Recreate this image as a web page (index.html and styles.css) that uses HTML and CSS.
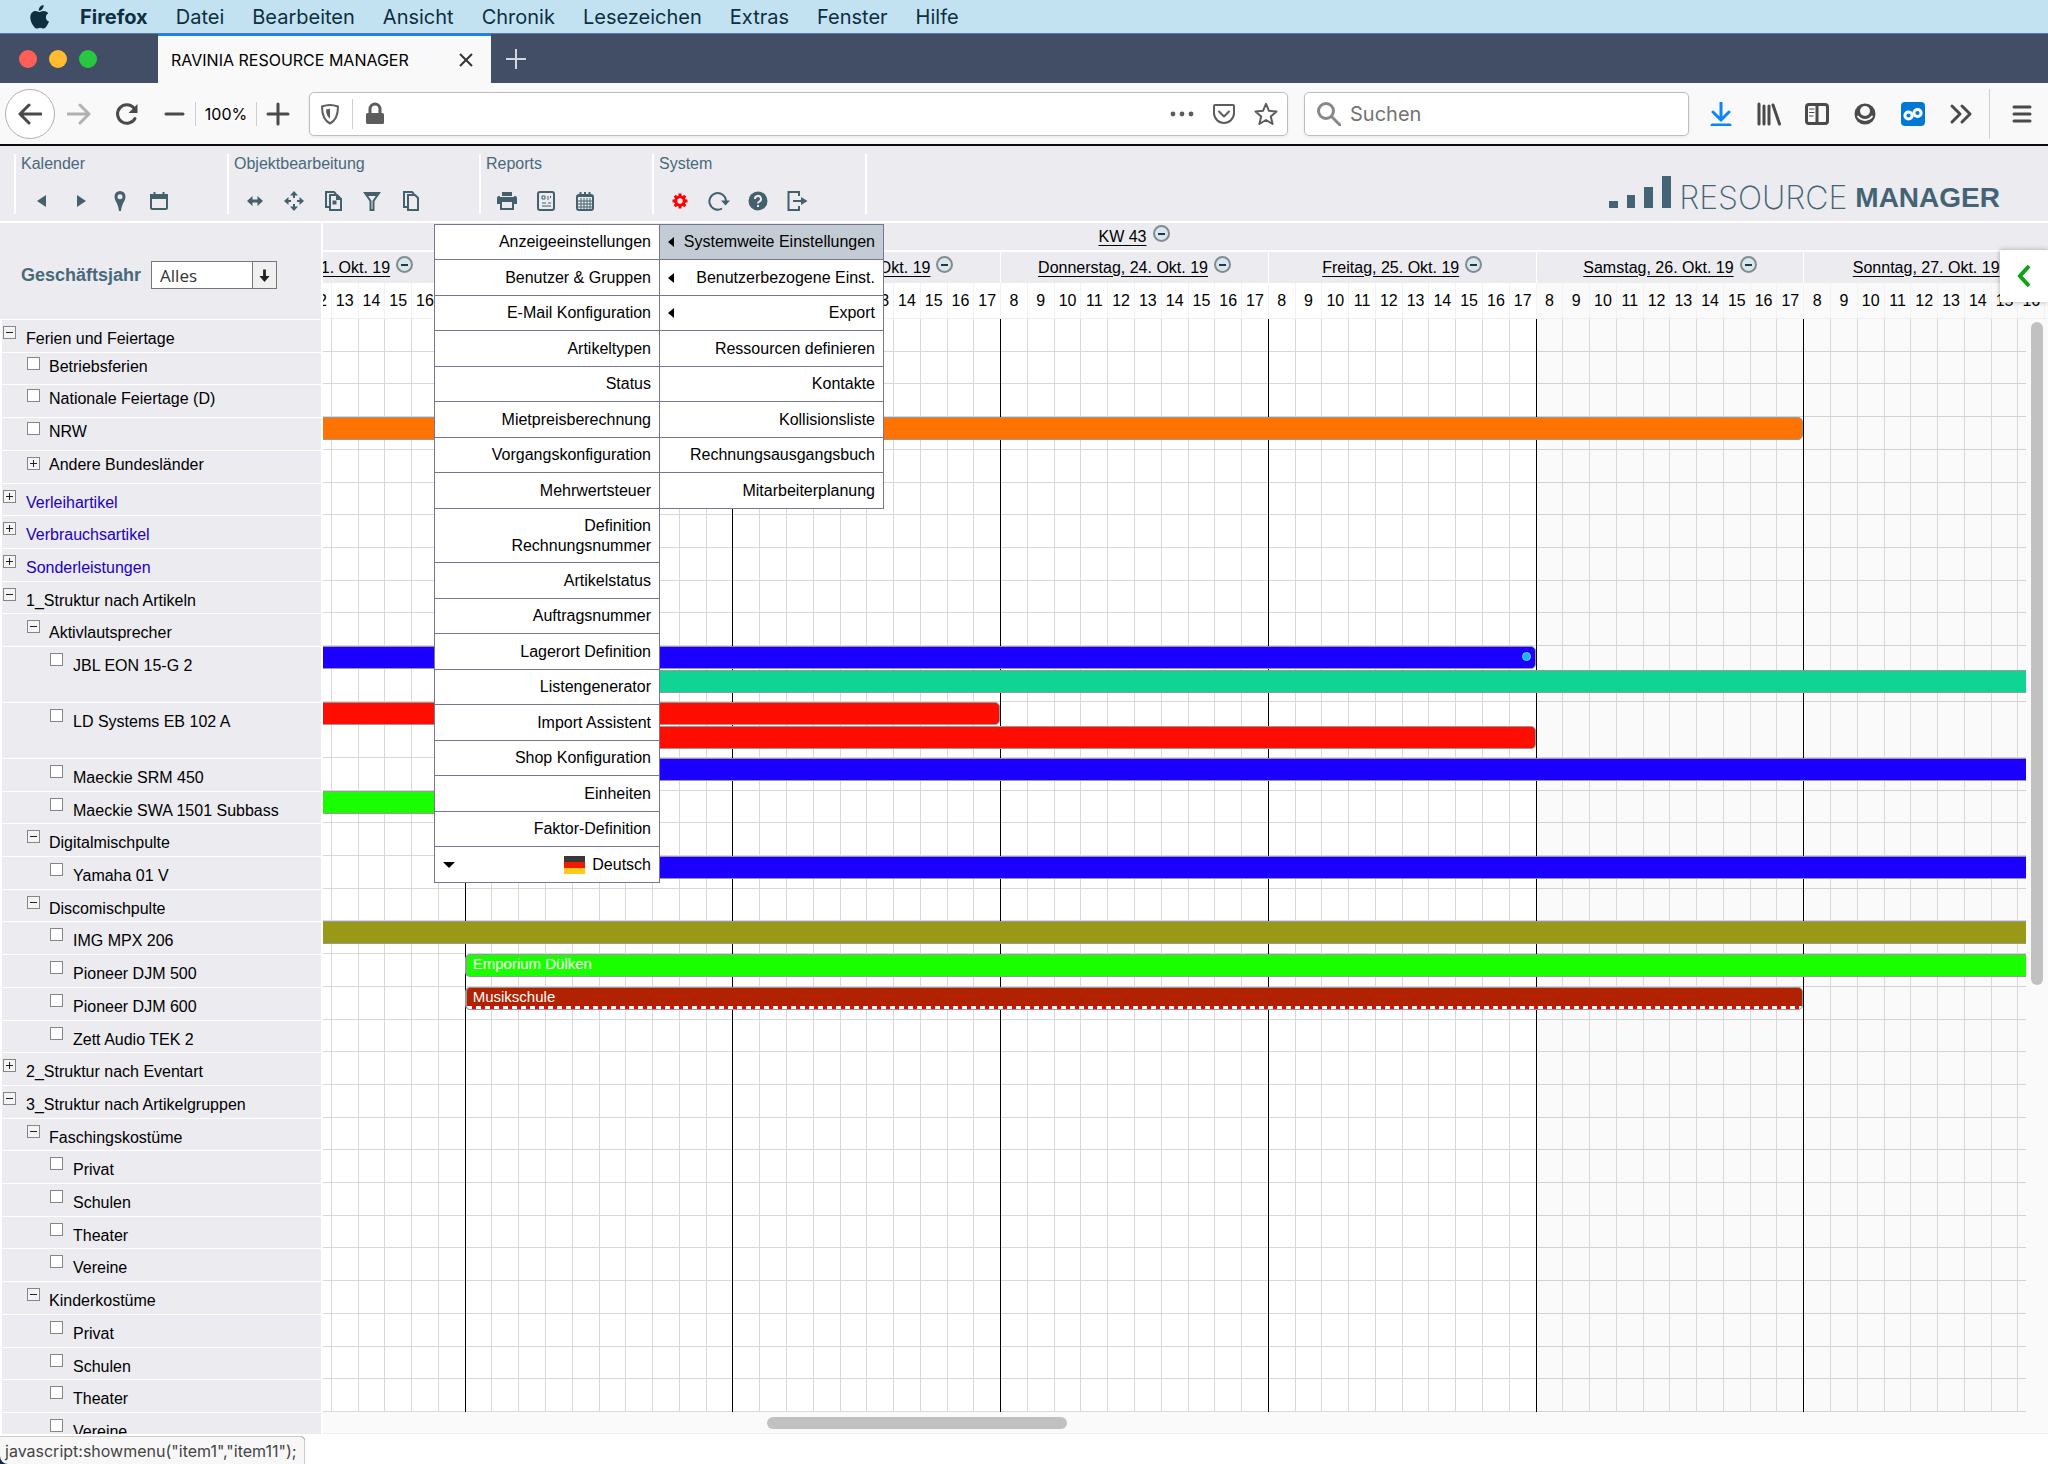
FILE: index.html
```html
<!DOCTYPE html>
<html lang="de">
<head>
    <meta charset="UTF-8">
    <meta name="viewport" content="width=device-width, initial-scale=1.0">
    <title>RAVINIA RESOURCE MANAGER</title>
    <link rel="stylesheet" href="styles.css">
</head>
<body>
    <nav class="mac-bar">
        <svg class="apple" viewBox="0 0 20 24"><path d="M13.6 0c.2 1.600-.4 3-1.300 4-.9 1.100-2.200 1.800-3.500 1.700-.2-1.500.5-3 1.300-3.900C11 .8 12.500.1 13.600 0zM18.300 8.200c-1.500.9-2.400 2.200-2.400 4 0 2.100 1.200 3.700 3.100 4.400-.5 1.500-1.300 3-2.300 4.400-.9 1.300-1.800 2.500-3.200 2.500-1.400 0-1.800-.8-3.400-.8s-2.100.8-3.400.8c-1.400 0-2.400-1.300-3.400-2.700C1.300 18 .3 14.900.3 12.500c0-4 2.600-6.400 5.200-6.400 1.500 0 2.800 1 3.700 1 .9 0 2.300-1.100 4.100-1.100 2 0 3.800.8 5 2.200z"/></svg>
        <a class="app-name" href="#">Firefox</a>
        <a href="#">Datei</a>
        <a href="#">Bearbeiten</a>
        <a href="#">Ansicht</a>
        <a href="#">Chronik</a>
        <a href="#">Lesezeichen</a>
        <a href="#">Extras</a>
        <a href="#">Fenster</a>
        <a href="#">Hilfe</a>
    </nav>

    <div class="tab-bar">
        <div class="lights">
            <span class="light close"></span>
            <span class="light minimize"></span>
            <span class="light maximize"></span>
        </div>
        <div class="tab">
            <span>RAVINIA RESOURCE MANAGER</span>
            <button aria-label="Tab schließen"><svg width="16" height="16" viewBox="0 0 16 16"><path d="M2 2l12 12M14 2L2 14"/></svg></button>
        </div>
        <button class="new-tab" aria-label="Neuer Tab"><svg width="22" height="22" viewBox="0 0 22 22"><path d="M11 1v20M1 11h20"/></svg></button>
    </div>

    <div class="nav-bar">
        <button class="back" aria-label="Zurück"><svg viewBox="0 0 24 24"><path d="M23 12H2M11 3l-9 9 9 9"/></svg></button>
        <button class="nav-btn off" aria-label="Vor"><svg viewBox="0 0 24 24"><path d="M1 12h21M13 3l9 9-9 9"/></svg></button>
        <button class="nav-btn" aria-label="Neu laden"><svg viewBox="0 0 24 24"><path d="M20 16.500A9.300 9.300 0 1 1 19 6"/><path class="solid" d="M22.500 2v9h-9z"/></svg></button>
        <div class="zoom">
            <button class="nav-btn" aria-label="Verkleinern"><svg viewBox="0 0 24 24"><path d="M4 12h17"/></svg></button>
            <span class="zoom-value">100%</span>
            <button class="nav-btn" aria-label="Vergrößern"><svg viewBox="0 0 24 24"><path d="M12 2v20M2 12h20"/></svg></button>
        </div>
        <div class="url-box">
            <svg class="shield" viewBox="0 0 20 24"><path d="M10 3c2.500 0 5 .5 8 1.500 0 8-2 14-8 17-6-3-8-9-8-17C5 3.500 7.500 3 10 3z"/><path class="solid" d="M6 7.500l4-.7v10c-2.500-2-4-5-4-9.300z"/></svg>
            <span class="line"></span>
            <svg class="lock" viewBox="0 0 20 24"><path d="M5 12V7a5 5 0 0 1 10 0v5"/><rect class="solid" x="1" y="11" width="18" height="11" rx="1.500"/></svg>
            <input type="text" aria-label="Adresse">
            <svg viewBox="0 0 24 24"><circle class="solid" cx="3" cy="12" r="2.400"/><circle class="solid" cx="12" cy="12" r="2.400"/><circle class="solid" cx="21" cy="12" r="2.400"/></svg>
            <svg viewBox="0 0 24 24"><path d="M3 3h18a1 1 0 0 1 1 1v7a10 10 0 0 1-20 0V4a1 1 0 0 1 1-1zM7 9.500l5 5 5-5"/></svg>
            <svg viewBox="0 0 24 24"><path d="M12 1.800l3 7 7.500.6-5.700 5 1.800 7.600-6.600-4-6.600 4 1.800-7.600-5.700-5 7.500-.6z"/></svg>
        </div>
        <div class="search-box">
            <svg viewBox="0 0 24 24"><circle cx="9" cy="9" r="7.500"/><path d="M15 15l8 8"/></svg>
            <input type="search" placeholder="Suchen" aria-label="Suchen">
        </div>
        <div class="nav-tools">
            <button class="nav-btn download" aria-label="Downloads"><svg viewBox="0 0 24 24"><path d="M12 1v16M4 10l8 8 8-8M3 23h18"/></svg></button>
            <button class="nav-btn" aria-label="Bibliothek"><svg viewBox="0 0 24 24"><path d="M2 2v20M7 4v18M12 4v18M16 3l6.500 19"/></svg></button>
            <button class="nav-btn" aria-label="Sidebar"><svg viewBox="0 0 24 24"><rect x="1.500" y="2.500" width="21" height="19" rx="2.500"/><path d="M12 3v18"/><path class="thin" d="M4.500 7H9M4.500 10.500H9M4.500 14H8"/></svg></button>
            <button class="nav-btn" aria-label="Konto"><svg viewBox="0 0 24 24"><circle class="solid" cx="12" cy="12" r="10.500"/><circle class="hole" cx="12" cy="9" r="5"/><path class="arc" d="M5 14.500c3.500 4.500 10.500 4.500 14 0"/></svg></button>
            <button class="nav-btn" aria-label="Erweiterung"><svg viewBox="0 0 24 24"><rect class="badge" width="24" height="24" rx="4"/><circle class="ring" cx="7.500" cy="13.500" r="3.600"/><circle class="ring" cx="16.500" cy="11" r="3.600"/></svg></button>
            <button class="nav-btn" aria-label="Mehr Werkzeuge"><svg viewBox="0 0 24 24"><path d="M3 4l8 8-8 8M13 4l8 8-8 8"/></svg></button>
            <span class="line tall"></span>
            <button class="nav-btn" aria-label="Menü"><svg viewBox="0 0 24 24"><path d="M4 5h16M4 12h16M4 19h16"/></svg></button>
        </div>
    </div>

    <header class="toolbar">
        <section class="group kalender">
            <h2>Kalender</h2>
            <div class="icons">
                <button aria-label="Zurück"><svg viewBox="0 0 22 22"><path class="fill" d="M15 5v12l-9-6z"/></svg></button>
                <button aria-label="Weiter"><svg viewBox="0 0 22 22"><path class="fill" d="M7 5v12l9-6z"/></svg></button>
                <button aria-label="Heute"><svg viewBox="0 0 22 22"><path class="fill" fill-rule="evenodd" d="M11 1a5.500 5.500 0 0 1 5.500 5.500C16.500 11 12.500 14 12 21h-2C9.500 14 5.500 11 5.500 6.500A5.500 5.500 0 0 1 11 1zm0 3.200a2.500 2.500 0 1 0 0 5 2.500 2.500 0 0 0 0-5z"/></svg></button>
                <button aria-label="Kalender"><svg viewBox="0 0 22 22"><rect x="3" y="5" width="16" height="14" rx="1.500"/><path class="fill" d="M2 4h18v5H2z"/><path d="M6.500 2v3M15.500 2v3"/></svg></button>
            </div>
        </section>
        <section class="group objekt">
            <h2>Objektbearbeitung</h2>
            <div class="icons">
                <button aria-label="Verlängern"><svg viewBox="0 0 22 22"><path class="fill" d="M3 11l5.500-5v3.400h5V6l5.500 5-5.500 5v-3.400h-5V16z"/></svg></button>
                <button aria-label="Verschieben"><svg viewBox="0 0 22 22"><path class="fill" d="M11 1l4 4.500h-3V8h-2V5.500H7zM11 21l-4-4.500h3V14h2v2.500h3zM1 11l4.500-4v3H8v2H5.500v3zM21 11l-4.500 4v-3H14v-2h2.500V7z"/></svg></button>
                <button aria-label="Ausschneiden"><svg viewBox="0 0 22 22"><path d="M8 17H4V2h8l2 2M8 5h7l4 4v11H8zM15 5v4h4"/><path class="fill" d="M10.500 10.500h4v4h-4z"/></svg></button>
                <button aria-label="Filter"><svg viewBox="0 0 22 22"><path d="M4 3h14l-5.500 8v9h-3v-9z"/><path class="fill" d="M3 2h16l-2 4H5z"/></svg></button>
                <button aria-label="Kopieren"><svg viewBox="0 0 22 22"><path d="M8 17H4V2h8l2 2M8 5h7l3 3v12H8z"/></svg></button>
            </div>
        </section>
        <section class="group reports">
            <h2>Reports</h2>
            <div class="icons">
                <button aria-label="Drucken"><svg viewBox="0 0 22 22"><path class="fill" fill-rule="evenodd" d="M6 2h10v4h3a2 2 0 0 1 2 2v6h-3v6H4v-6H1V8a2 2 0 0 1 2-2h3zm0 10v6h10v-6z"/><path class="gap" d="M4 6.500h14"/></svg></button>
                <button aria-label="Bericht"><svg viewBox="0 0 22 22"><rect x="3" y="2" width="16" height="18" rx="2"/><path class="thin" d="M7 6h3v3H7zM13 6v4M15.500 6v2M7 13h4M13 13h3M7 16h9"/></svg></button>
                <button aria-label="Terminliste"><svg viewBox="0 0 22 22"><rect x="3" y="5" width="16" height="15" rx="2"/><path d="M3 6h16M6.500 2v3M11 2v3M15.500 2v3"/><path class="thin" d="M7 8v11M10 8v11M13 8v11M16 8v11M4 11h14M4 14h14M4 17h14"/></svg></button>
            </div>
        </section>
        <section class="group system">
            <h2>System</h2>
            <div class="icons">
                <button class="active" aria-label="Einstellungen"><svg viewBox="0 0 22 22"><circle cx="11" cy="11" r="4.300"/><path d="M11 6V3.500M11 16v2.500M6 11H3.500M16 11h2.500M7.500 7.500L5.700 5.700M14.500 7.500l1.800-1.800M7.500 14.500l-1.800 1.800M14.500 14.500l1.800 1.800"/></svg></button>
                <button aria-label="Aktualisieren"><svg viewBox="0 0 22 22"><path d="M14 18.500A8.300 8.300 0 1 1 18 11"/><path class="fill" d="M13 10.500h9l-4.500 5z"/></svg></button>
                <button aria-label="Hilfe"><svg viewBox="0 0 22 22"><circle class="fill" cx="11" cy="11" r="9.500"/><path class="mark" d="M8 9a3 3 0 1 1 4.500 2.500c-1 .6-1.500 1-1.500 2M11 15v2"/></svg></button>
                <button aria-label="Abmelden"><svg viewBox="0 0 22 22"><path d="M13 6V2H2.500v18H13v-4M7 11h9"/><path class="fill" d="M15 7l6.500 4-6.500 4z"/></svg></button>
            </div>
            <ul class="menu">
                <li class="selected">
                    <i class="arrow-left"></i><a href="#">Systemweite Einstellungen</a>
                    <ul class="menu submenu">
                        <li><a href="#">Anzeigeeinstellungen</a></li>
                        <li><a href="#">Benutzer &amp; Gruppen</a></li>
                        <li><a href="#">E-Mail Konfiguration</a></li>
                        <li><a href="#">Artikeltypen</a></li>
                        <li><a href="#">Status</a></li>
                        <li><a href="#">Mietpreisberechnung</a></li>
                        <li><a href="#">Vorgangskonfiguration</a></li>
                        <li><a href="#">Mehrwertsteuer</a></li>
                        <li class="two-lines"><a href="#">Definition<br>Rechnungsnummer</a></li>
                        <li><a href="#">Artikelstatus</a></li>
                        <li><a href="#">Auftragsnummer</a></li>
                        <li><a href="#">Lagerort Definition</a></li>
                        <li><a href="#">Listengenerator</a></li>
                        <li><a href="#">Import Assistent</a></li>
                        <li><a href="#">Shop Konfiguration</a></li>
                        <li><a href="#">Einheiten</a></li>
                        <li><a href="#">Faktor-Definition</a></li>
                        <li>
                            <i class="arrow-down"></i>
                            <svg class="flag" viewBox="0 0 21 18"><path fill="#3a3636" d="M0 0h21v6H0z"/><path fill="#f01a00" d="M0 6h21v6H0z"/><path fill="#ffc81a" d="M0 12h21v6H0z"/></svg>
                            <a href="#">Deutsch</a>
                        </li>
                    </ul>
                </li>
                <li><i class="arrow-left"></i><a href="#">Benutzerbezogene Einst.</a></li>
                <li><i class="arrow-left"></i><a href="#">Export</a></li>
                <li><a href="#">Ressourcen definieren</a></li>
                <li><a href="#">Kontakte</a></li>
                <li><a href="#">Kollisionsliste</a></li>
                <li><a href="#">Rechnungsausgangsbuch</a></li>
                <li><a href="#">Mitarbeiterplanung</a></li>
            </ul>
        </section>
        <div class="logo">
            <svg viewBox="0 0 62 32"><path d="M0 25h9v7H0zM18 19h8v13h-8zM35 11h9v21h-9zM53 0h9v32h-9z"/></svg>
            <span class="logo-light">RESOURCE</span>
            <span class="logo-bold">MANAGER</span>
        </div>
    </header>

    <main class="planner">
        <aside class="sidebar">
            <div class="filter">
                <label for="year">Geschäftsjahr</label>
                <div class="select">
                    <select id="year"><option>Alles</option></select>
                    <svg viewBox="0 0 22 28"><path d="M9.500 8h3v7h4L11 21.500 5.500 15h4z"/></svg>
                </div>
            </div>
            <div class="tree">
                <div class="row"><button class="toggle minus" aria-label="Zuklappen"></button><span>Ferien und Feiertage</span></div>
                <div class="row level-1 high"><input type="checkbox" id="c1"><label for="c1">Betriebsferien</label></div>
                <div class="row level-1 high"><input type="checkbox" id="c2"><label for="c2">Nationale Feiertage (D)</label></div>
                <div class="row level-1 high"><input type="checkbox" id="c3"><label for="c3">NRW</label></div>
                <div class="row level-1 high"><button class="toggle plus" aria-label="Aufklappen"></button><span>Andere Bundesländer</span></div>
                <div class="row"><button class="toggle plus" aria-label="Aufklappen"></button><a href="#">Verleihartikel</a></div>
                <div class="row"><button class="toggle plus" aria-label="Aufklappen"></button><a href="#">Verbrauchsartikel</a></div>
                <div class="row"><button class="toggle plus" aria-label="Aufklappen"></button><a href="#">Sonderleistungen</a></div>
                <div class="row"><button class="toggle minus" aria-label="Zuklappen"></button><span>1_Struktur nach Artikeln</span></div>
                <div class="row level-1"><button class="toggle minus" aria-label="Zuklappen"></button><span>Aktivlautsprecher</span></div>
                <div class="row level-2 double"><input type="checkbox" id="c4"><label for="c4">JBL EON 15-G 2</label></div>
                <div class="row level-2 double"><input type="checkbox" id="c5"><label for="c5">LD Systems EB 102 A</label></div>
                <div class="row level-2"><input type="checkbox" id="c6"><label for="c6">Maeckie SRM 450</label></div>
                <div class="row level-2"><input type="checkbox" id="c7"><label for="c7">Maeckie SWA 1501 Subbass</label></div>
                <div class="row level-1"><button class="toggle minus" aria-label="Zuklappen"></button><span>Digitalmischpulte</span></div>
                <div class="row level-2"><input type="checkbox" id="c8"><label for="c8">Yamaha 01 V</label></div>
                <div class="row level-1"><button class="toggle minus" aria-label="Zuklappen"></button><span>Discomischpulte</span></div>
                <div class="row level-2"><input type="checkbox" id="c9"><label for="c9">IMG MPX 206</label></div>
                <div class="row level-2"><input type="checkbox" id="c10"><label for="c10">Pioneer DJM 500</label></div>
                <div class="row level-2"><input type="checkbox" id="c11"><label for="c11">Pioneer DJM 600</label></div>
                <div class="row level-2"><input type="checkbox" id="c12"><label for="c12">Zett Audio TEK 2</label></div>
                <div class="row"><button class="toggle plus" aria-label="Aufklappen"></button><span>2_Struktur nach Eventart</span></div>
                <div class="row"><button class="toggle minus" aria-label="Zuklappen"></button><span>3_Struktur nach Artikelgruppen</span></div>
                <div class="row level-1"><button class="toggle minus" aria-label="Zuklappen"></button><span>Faschingskostüme</span></div>
                <div class="row level-2"><input type="checkbox" id="c13"><label for="c13">Privat</label></div>
                <div class="row level-2"><input type="checkbox" id="c14"><label for="c14">Schulen</label></div>
                <div class="row level-2"><input type="checkbox" id="c15"><label for="c15">Theater</label></div>
                <div class="row level-2"><input type="checkbox" id="c16"><label for="c16">Vereine</label></div>
                <div class="row level-1"><button class="toggle minus" aria-label="Zuklappen"></button><span>Kinderkostüme</span></div>
                <div class="row level-2"><input type="checkbox" id="c17"><label for="c17">Privat</label></div>
                <div class="row level-2"><input type="checkbox" id="c18"><label for="c18">Schulen</label></div>
                <div class="row level-2"><input type="checkbox" id="c19"><label for="c19">Theater</label></div>
                <div class="row level-2 cut"><input type="checkbox" id="c20"><label for="c20">Vereine</label></div>
            </div>
        </aside>

        <section class="chart">
            <div class="scale">
                <div class="track week"><a href="#">KW 43</a><i class="collapse"></i></div>
                <div class="track days">
                    <div class="day"><a href="#">Montag, 21. Okt. 19</a><i class="collapse"></i></div>
                    <div class="day"><a href="#">Dienstag, 22. Okt. 19</a><i class="collapse"></i></div>
                    <div class="day"><a href="#">Mittwoch, 23. Okt. 19</a><i class="collapse"></i></div>
                    <div class="day"><a href="#">Donnerstag, 24. Okt. 19</a><i class="collapse"></i></div>
                    <div class="day"><a href="#">Freitag, 25. Okt. 19</a><i class="collapse"></i></div>
                    <div class="day"><a href="#">Samstag, 26. Okt. 19</a><i class="collapse"></i></div>
                    <div class="day"><a href="#">Sonntag, 27. Okt. 19</a><i class="collapse"></i></div>
                </div>
                <div class="track hours" id="hours"></div>
            </div>
            <div class="body">
                <div class="track grid" id="grid"></div>
                <div class="track lanes">
                    <div class="lane"></div>
                    <div class="lane"></div>
                    <div class="lane"></div>
                    <div class="lane"><div class="bar orange end" style="--from: 0; --to: 6"></div></div>
                    <div class="lane"></div>
                    <div class="lane"></div>
                    <div class="lane"></div>
                    <div class="lane"></div>
                    <div class="lane"></div>
                    <div class="lane"></div>
                    <div class="lane double">
                        <div class="bar blue end" style="--from: 0; --to: 5"><span class="dot"></span></div>
                        <div class="bar teal start" style="--from: 1; --to: 7"></div>
                    </div>
                    <div class="lane double">
                        <div class="bar red end" style="--from: 0; --to: 3"></div>
                        <div class="bar red start end" style="--from: 1; --to: 5"></div>
                    </div>
                    <div class="lane"><div class="bar blue start" style="--from: 1; --to: 7"></div></div>
                    <div class="lane"><div class="bar green end" style="--from: 0; --to: 1"></div></div>
                    <div class="lane"></div>
                    <div class="lane"><div class="bar blue start" style="--from: 1; --to: 7"></div></div>
                    <div class="lane"></div>
                    <div class="lane"><div class="bar olive" style="--from: 0; --to: 7"></div></div>
                    <div class="lane"><div class="bar green start" style="--from: 1; --to: 7"><span>Emporium Dülken</span></div></div>
                    <div class="lane"><div class="bar brown start end" style="--from: 1; --to: 6"><span>Musikschule</span></div></div>
                    <div class="lane"></div>
                    <div class="lane"></div>
                    <div class="lane"></div>
                    <div class="lane"></div>
                    <div class="lane"></div>
                    <div class="lane"></div>
                    <div class="lane"></div>
                    <div class="lane"></div>
                    <div class="lane"></div>
                    <div class="lane"></div>
                    <div class="lane"></div>
                    <div class="lane"></div>
                </div>
                <div class="scroll-y"><span></span></div>
            </div>
            <div class="scroll-x"><span></span></div>
            <button class="panel-tab" aria-label="Seitenleiste öffnen"><svg viewBox="0 0 14 24"><path d="M12 2L3 12l9 10"/></svg></button>
        </section>
    </main>

    <div class="status-wrap"><div class="status">javascript:showmenu("item1","item11");</div></div>

    <script>
        const hours = document.getElementById('hours');
        const grid = document.getElementById('grid');

        // seven days, 8 to 17 o'clock
        for (let day = 0; day < 7; day++) {
            const head = document.createElement('div');
            const column = document.createElement('div');
            head.className = column.className = day > 4 ? 'day weekend' : 'day';
            for (let hour = 8; hour < 18; hour++) {
                const label = document.createElement('span');
                label.textContent = hour;
                head.appendChild(label);
                column.appendChild(document.createElement('span'));
            }
            hours.appendChild(head);
            grid.appendChild(column);
        }
    </script>
</body>
</html>
```

FILE: styles.css
```css
* {
    margin: 0;
    padding: 0;
    box-sizing: border-box;
}

body {
    font-family: "Liberation Sans", Arial, sans-serif;
    font-size: 16px;
    line-height: 20px;
    color: #000;
    background: #fff;
    height: 100vh;
    display: flex;
    flex-direction: column;
    overflow: hidden;
}

a {
    color: inherit;
    text-decoration: none;
}

button {
    border: none;
    background: none;
    display: flex;
    align-items: center;
    justify-content: center;
}

ul {
    list-style: none;
}

svg {
    flex: none;
}

/* macOS menu bar */
.mac-bar {
    height: 34px;
    flex: none;
    padding-left: 30px;
    display: flex;
    align-items: center;
    gap: 28px;
    background: #c3e2f1;
    border-bottom: 1px solid #55799f;
    font-family: Inter, sans-serif;
    font-size: 20px;
    color: #0d2f3f;
}

.apple {
    width: 20px;
    height: 24px;
    fill: #0d2f3f;
}

.app-name {
    font-weight: 700;
    margin-left: 2px;
}

/* Firefox tabs */
.tab-bar {
    height: 49px;
    flex: none;
    display: flex;
    background: #424e65;
}

.lights {
    width: 158px;
    padding-left: 19px;
    display: flex;
    align-items: center;
    gap: 12px;
}

.light {
    width: 18px;
    height: 18px;
    border-radius: 50%;
}

.light.close {
    background: #ff5f57;
}

.light.minimize {
    background: #febc2e;
}

.light.maximize {
    background: #28c840;
}

.tab {
    width: 333px;
    padding: 0 17px 0 13px;
    display: flex;
    align-items: center;
    justify-content: space-between;
    background: #f9f9fa;
    border-top: 2px solid #0a84ff;
    font-family: Inter, sans-serif;
    font-size: 16px;
}

.tab svg {
    stroke: #333;
    stroke-width: 2;
}

.new-tab {
    width: 50px;
}

.new-tab svg {
    stroke: #d3d7de;
    stroke-width: 2;
}

/* Firefox navigation */
.nav-bar {
    height: 63px;
    flex: none;
    padding: 0 2px 0 5px;
    display: flex;
    align-items: center;
    background: #f9f9fa;
    border-bottom: 2px solid #0c0c0d;
}

.nav-bar svg {
    width: 24px;
    height: 24px;
    fill: none;
    stroke: #4a4a4b;
    stroke-width: 3;
    stroke-linecap: round;
    stroke-linejoin: round;
}

.nav-bar svg .solid {
    fill: #4a4a4b;
    stroke: none;
}

.nav-bar svg .thin {
    stroke-width: 1;
}

.nav-bar svg .hole {
    fill: #f9f9fa;
    stroke: none;
}

.nav-bar svg .arc {
    stroke: #f9f9fa;
    stroke-width: 2;
}

.nav-bar svg .badge {
    fill: #0078d4;
    stroke: none;
}

.nav-bar svg .ring {
    stroke: #fff;
}

.back {
    width: 50px;
    height: 50px;
    border: 1px solid #b1b1b3;
    border-radius: 50%;
    background: #fff;
}

.nav-btn {
    width: 48px;
    height: 48px;
}

.nav-btn.off svg {
    stroke: #b1b1b3;
}

.nav-btn.download svg {
    stroke: #0a84ff;
}

.zoom {
    padding-left: 2px;
    display: flex;
    align-items: center;
}

.zoom .nav-btn {
    width: 42px;
}

.zoom-value {
    width: 62px;
    border-left: 1px solid #cfcfd1;
    border-right: 1px solid #cfcfd1;
    text-align: center;
    font-family: Inter, sans-serif;
    font-size: 16px;
    line-height: 24px;
}

.url-box,
.search-box {
    height: 44px;
    display: flex;
    align-items: center;
    background: #fff;
    border: 1px solid #bdbdbf;
    border-radius: 5px;
    box-shadow: 0 1px 3px rgba(0, 0, 0, 0.08);
}

.url-box {
    flex: 1;
    margin: 0 16px 0 10px;
    padding: 0 9px 0 10px;
    gap: 18px;
}

.url-box svg {
    stroke: #5c5c5d;
    stroke-width: 2;
}

.url-box svg .solid {
    fill: #5c5c5d;
}

.url-box .shield,
.url-box .lock {
    width: 20px;
}

.url-box .lock {
    stroke-width: 3;
}

.url-box .line {
    margin: 0 -6px;
}

.line {
    width: 1px;
    height: 30px;
    background: #cfcfd1;
}

.line.tall {
    height: 50px;
    margin: 0 8px 0 4px;
}

.nav-bar input {
    flex: 1;
    min-width: 0;
    border: none;
    outline: none;
    background: none;
    font-family: Inter, sans-serif;
    font-size: 20px;
}

.nav-bar input::placeholder {
    color: #737373;
}

.search-box {
    width: 385px;
    padding: 0 12px;
    gap: 9px;
}

.search-box svg {
    stroke: #888;
}

.nav-tools {
    padding-left: 8px;
    display: flex;
    align-items: center;
}

/* Application toolbar */
.toolbar {
    height: 77px;
    flex: none;
    padding: 8px 0 7px 14px;
    display: flex;
    background: #ebebf0;
    border-bottom: 2px solid #fff;
}

.group {
    position: relative;
    border-left: 2px solid #fff;
}

.group h2 {
    padding-left: 5px;
    font-size: 16px;
    font-weight: 400;
    color: #48697a;
}

.kalender {
    width: 213px;
}

.objekt {
    width: 252px;
}

.reports {
    width: 173px;
}

.system {
    width: 215px;
    border-right: 2px solid #fff;
}

.icons {
    padding: 16px 0 0 15px;
    display: flex;
    gap: 17px;
}

.icons svg {
    width: 22px;
    height: 22px;
    fill: none;
    stroke: #44606d;
    stroke-width: 2;
}

.icons .fill {
    fill: #44606d;
    stroke: none;
}

.icons .thin {
    stroke-width: 1;
}

.icons .gap {
    stroke: #ebebf0;
    stroke-width: 1;
}

.icons .mark {
    stroke: #ebebf0;
}

.icons .active svg {
    stroke: #f00;
    stroke-width: 3;
}

.logo {
    margin-left: auto;
    padding: 0 48px 2px 0;
    display: flex;
    align-items: flex-end;
    gap: 8px;
    font-size: 28px;
    line-height: 28px;
    color: #446374;
}

.logo svg {
    width: 62px;
    height: 32px;
    fill: #446374;
    margin-bottom: 4px;
}

.logo-light {
    font-family: Inter, sans-serif;
    font-size: 32px;
    font-weight: 200;
}

.logo-bold {
    font-weight: 700;
}

/* Dropdown menus */
.menu {
    position: absolute;
    top: 70px;
    left: 5px;
    z-index: 10;
    width: 225px;
    background: #fff;
    border: 1px solid #77768e;
    border-top: none;
}

.menu li {
    position: relative;
    height: 35px;
    padding: 0 8px;
    display: flex;
    align-items: center;
    justify-content: flex-end;
    border-top: 1px solid #77768e;
    text-align: right;
}

.menu li:nth-child(even) {
    height: 36px;
}

.menu .two-lines {
    height: 54px;
}

.menu .selected {
    background: #c3ccd5;
}

.submenu {
    top: -1px;
    left: auto;
    right: 223px;
    width: 226px;
}

.arrow-left,
.arrow-down {
    margin-right: auto;
    border: 5px solid transparent;
}

.arrow-left {
    border-width: 5px 6px 5px 0;
    border-right-color: #000;
}

.arrow-down {
    border-width: 6px 6px 0 6px;
    border-top-color: #000;
}

.flag {
    width: 21px;
    height: 18px;
    margin-right: 7px;
}

/* Planner */
.planner {
    flex: 1;
    min-height: 0;
    margin-bottom: 30px;
    display: flex;
    gap: 2px;
}

.sidebar {
    width: 321px;
    flex: none;
    display: flex;
    flex-direction: column;
}

.filter {
    height: 96px;
    flex: none;
    padding: 8px 0 0 21px;
    display: flex;
    align-items: center;
    gap: 10px;
    background: #ebebf0;
}

.filter label {
    font-size: 18px;
    font-weight: 700;
    color: #48697a;
}

.select {
    width: 126px;
    height: 28px;
    display: flex;
    border: 1px solid #777;
    background: #fff;
}

.select select {
    flex: 1;
    padding-left: 8px;
    appearance: none;
    border: none;
    background: none;
    font-family: "Open Sans", sans-serif;
    font-size: 17px;
    color: #333;
}

.select svg {
    width: 24px;
    height: 26px;
    border-left: 1px solid #777;
    background: #f0f0f0;
    fill: #222;
}

.tree {
    flex: 1;
    min-height: 0;
    padding-left: 2px;
    display: flex;
    flex-direction: column;
}

.row {
    flex: 15 1 0;
    min-height: 0;
    padding-left: 1px;
    display: flex;
    align-items: flex-start;
    gap: 10px;
    background: #ebebf0;
    border-top: 1px solid #fff;
}

.row.double {
    flex-grow: 26;
}

.row.cut {
    flex: none;
    height: 22px;
    overflow: hidden;
}

.level-1 {
    padding-left: 25px;
    gap: 9px;
}

.level-2 {
    padding-left: 48px;
}

.row > * {
    margin-top: 9px;
}

.row.high > * {
    margin-top: 4px;
}

.row a {
    color: #2200c0;
}

.row .toggle,
.row input {
    width: 13px;
    height: 13px;
    flex: none;
    margin-top: 6px;
    appearance: none;
    border: 1px solid #868686;
    background: #fff;
}

.toggle.minus {
    background: linear-gradient(#222, #222) center / 7px 1px no-repeat #f4f4f4;
}

.row .toggle.minus {
    background: linear-gradient(#222, #222) center / 7px 1px no-repeat #f4f4f4;
}

.row .toggle.plus {
    background: linear-gradient(#222, #222) center / 7px 1px no-repeat,
        linear-gradient(#222, #222) center / 1px 7px no-repeat #f4f4f4;
}

/* Time scale */
.chart {
    position: relative;
    flex: 1;
    min-width: 0;
    display: flex;
    flex-direction: column;
}

.scale {
    height: 96px;
    flex: none;
    overflow: hidden;
}

/* the first day is scrolled half out on the left, the last one on the right */
.track {
    margin: 0 -23px 0 -126px;
}

.week {
    height: 28px;
    display: flex;
    align-items: center;
    justify-content: center;
    gap: 6px;
    background: #ebebf0;
    border-bottom: 1px solid #fff;
}

.days,
.hours,
.grid {
    display: flex;
}

.days a,
.week a {
    text-decoration: underline;
    text-underline-offset: 3px;
}

.day {
    flex: 1 1 0;
    min-width: 0;
    display: flex;
}

.days .day {
    height: 32px;
    align-items: center;
    justify-content: center;
    gap: 6px;
    background: #ebebf0;
    border-left: 1px solid #fff;
    border-top: 1px solid #fff;
    white-space: nowrap;
}

.collapse {
    width: 17px;
    height: 17px;
    margin-bottom: 6px;
    border: 2px solid #858b8d;
    border-radius: 50%;
    background: linear-gradient(#333, #333) center / 7px 2px no-repeat #d3e8f0;
}

.day span {
    flex: 1 1 0;
    min-width: 0;
}

.hours .day {
    height: 36px;
    border-bottom: 1px solid #f0f0f0;
}

.hours span {
    padding-top: 8px;
    border-left: 1px solid #f2f2f2;
    text-align: center;
}

.hours .weekend {
    background: #fafafa;
}

/* Chart */
.body {
    position: relative;
    flex: 1;
    min-height: 0;
    display: flex;
    overflow: hidden;
}

.grid {
    position: absolute;
    inset: 0;
    z-index: 1;
}

.grid span {
    border-left: 1px solid #d8d8d8;
}

.grid span:first-child {
    border-left-color: #000;
}

.grid .weekend {
    background: rgba(0, 0, 0, 0.02);
}

.lanes {
    flex: 1;
    display: flex;
    flex-direction: column;
}

.lane {
    flex: 15 1 0;
    min-height: 0;
    border-bottom: 1px solid #d8d8d8;
}

.lane.double {
    flex-grow: 26;
}

.bar {
    position: relative;
    z-index: 2;
    height: 23px;
    margin-left: calc(var(--from) * 100% / 7);
    width: calc((var(--to) - var(--from)) * 100% / 7);
    padding: 0 4px 0 6px;
    border: 1px solid #999;
    font-size: 15px;
    line-height: 18px;
    color: #fff;
}

.bar + .bar {
    margin-top: 1px;
}

.bar.start {
    border-top-left-radius: 5px;
    border-bottom-left-radius: 5px;
    border-left-width: 2px;
}

.bar.end {
    border-top-right-radius: 5px;
    border-bottom-right-radius: 5px;
}

.orange {
    background: #ff7300;
}

.blue {
    background: #1b00ff;
}

.teal {
    background: #10d494;
}

.red {
    background: #ff0d00;
}

.green {
    background: #1aff00;
}

.olive {
    background: #999917;
}

.brown {
    background: repeating-linear-gradient(90deg, #fff 0 5px, #f00 5px 9px) 0 100% / 100% 3px no-repeat #b02200;
}

.dot {
    display: block;
    width: 9px;
    height: 9px;
    margin: 5px 0 0 auto;
    border: 1px solid #7fc4f5;
    border-radius: 50%;
    background: #12b8ff;
}

.scroll-y {
    position: absolute;
    top: 0;
    right: 0;
    bottom: 0;
    z-index: 3;
    width: 22px;
    padding: 3px 5px;
    background: #fafafa;
}

.scroll-y span {
    display: block;
    height: 61%;
    border-radius: 6px;
    background: #c1c1c1;
}

.scroll-x {
    height: 22px;
    flex: none;
    padding: 5px 0 5px 444px;
    background: #fafafa;
    border-bottom: 1px solid #eee;
}

.scroll-x span {
    display: block;
    width: 300px;
    height: 12px;
    border-radius: 6px;
    background: #c1c1c1;
}

.panel-tab {
    position: absolute;
    top: 27px;
    right: 0;
    z-index: 4;
    width: 48px;
    height: 52px;
    background: #fff;
    box-shadow: 0 0 5px rgba(0, 0, 0, 0.3);
}

.panel-tab svg {
    width: 14px;
    height: 24px;
    fill: none;
    stroke: #0aa514;
    stroke-width: 4;
}

/* Link preview at the window's lower edge */
.status-wrap {
    position: absolute;
    left: 0;
    bottom: 0;
    background: #10284a;
    border-radius: 0 5px 0 0;
}

.status {
    padding: 4px 7px 3px 5px;
    border: 1px solid #ccc;
    border-width: 1px 1px 0 0;
    border-radius: 0 5px 0 8px;
    background: #f7f7f8;
    font-family: Inter, sans-serif;
    font-size: 16px;
    color: #444;
}
```
